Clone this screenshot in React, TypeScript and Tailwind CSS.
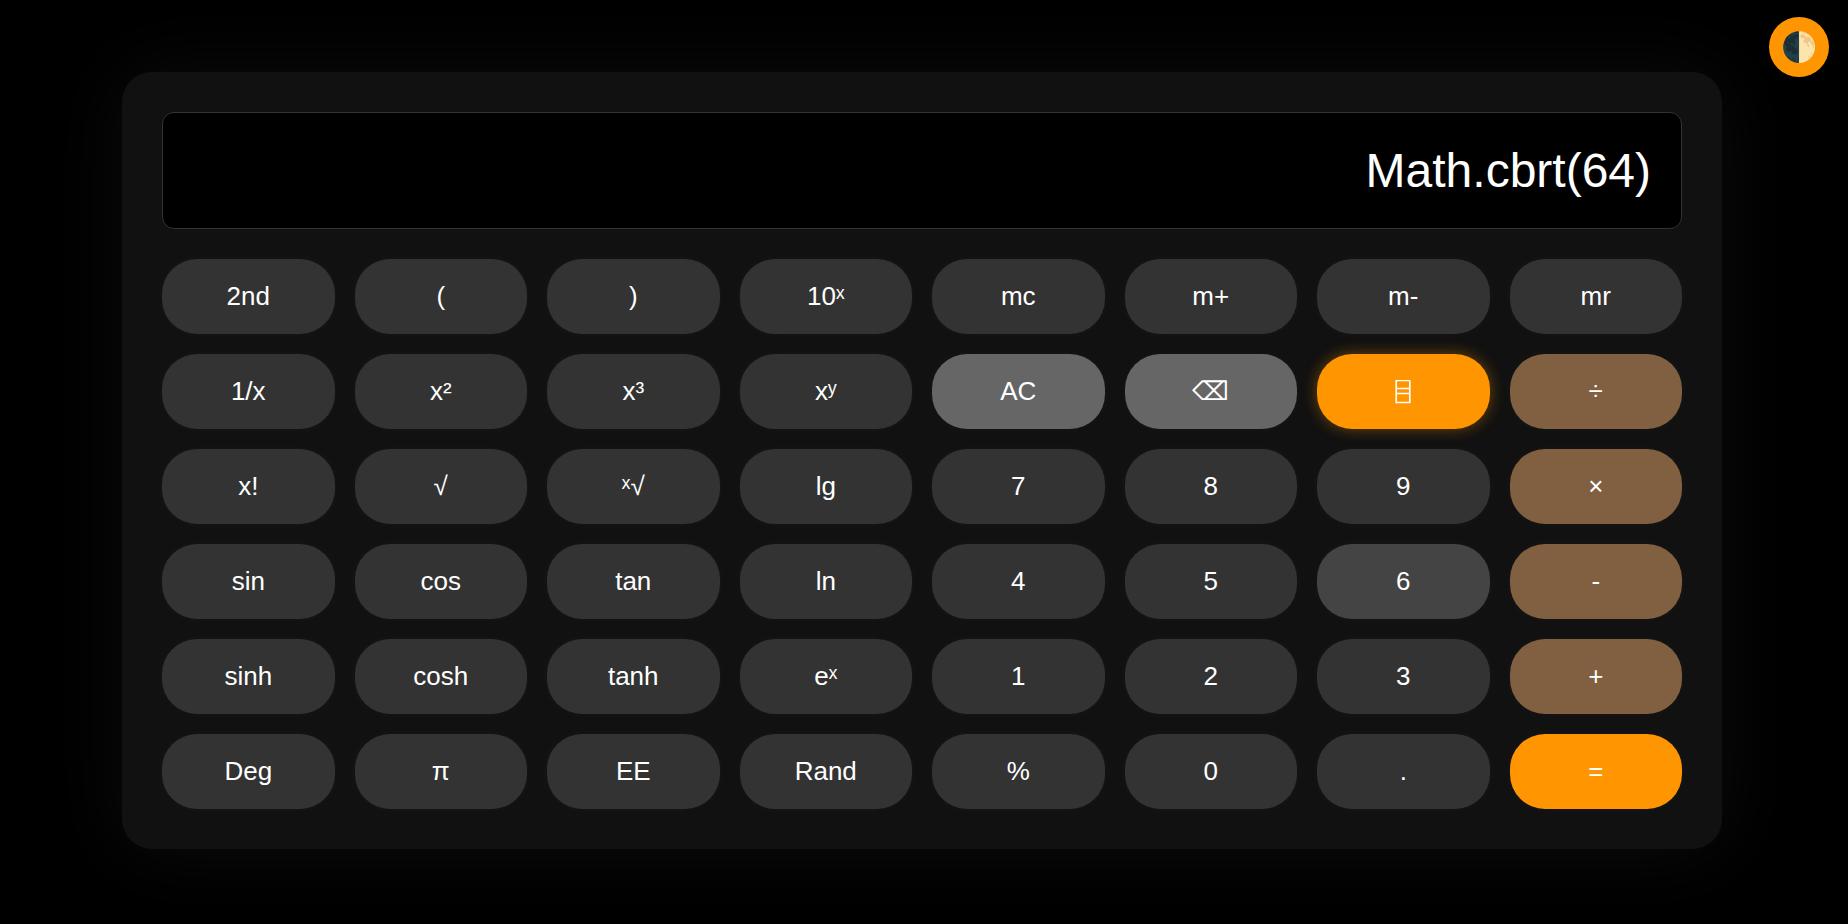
import { useState } from "react";

type Tone = "plain" | "light" | "active" | "operator" | "hovered" | "equals";

const tones: Record<Tone, string> = {
  plain: "bg-[#333] shadow-[0_0_10px_rgba(255,255,255,0.03)]",
  light: "bg-[#666] shadow-[0_0_10px_rgba(255,255,255,0.03)]",
  active: "bg-[#ff9500] shadow-[0_0_15px_rgba(255,149,0,0.4)]",
  operator: "bg-[#806040] shadow-[0_0_10px_rgba(255,255,255,0.03)]",
  hovered: "bg-[#444] shadow-[0_0_10px_rgba(255,255,255,0.03)]",
  equals: "bg-[#ff9500] shadow-[0_0_10px_rgba(255,255,255,0.03)]",
};

const rows: string[][] = [
  ["2nd", "(", ")", "10ˣ", "mc", "m+", "m-", "mr"],
  ["1/x", "x²", "x³", "xʸ", "AC", "⌫", "⌸", "÷"],
  ["x!", "√", "ˣ√", "lg", "7", "8", "9", "×"],
  ["sin", "cos", "tan", "ln", "4", "5", "6", "-"],
  ["sinh", "cosh", "tanh", "eˣ", "1", "2", "3", "+"],
  ["Deg", "π", "EE", "Rand", "%", "0", ".", "="],
];

const keyTones: Record<string, Tone> = {
  AC: "light",
  "⌫": "light",
  "⌸": "active",
  "÷": "operator",
  "×": "operator",
  "-": "operator",
  "+": "operator",
  "6": "hovered",
  "=": "equals",
};

function KeypadIcon() {
  return (
    <svg
      viewBox="0 0 16 24"
      className="mx-auto h-6 w-4"
      fill="none"
      stroke="currentColor"
      strokeWidth="1.7"
      role="img"
      aria-label="⌸"
    >
      <path d="M1.2 0.5h13.6v22H1.2zM1.2 8.5h13.6M1.2 13.5h13.6" />
    </svg>
  );
}

export default function App() {
  const [expression, setExpression] = useState("Math.cbrt(64)");

  const press = (key: string) => {
    if (key === "AC") setExpression("");
    else if (key === "⌫") setExpression((e) => e.slice(0, -1));
    else if (/^[0-9.()+\-×÷%]$/.test(key)) setExpression((e) => e + key);
  };

  return (
    <main className="flex min-h-screen items-center justify-center bg-black pr-1 pb-[3px] font-['Liberation_Sans',Arial,sans-serif] text-white">
      <button
        type="button"
        aria-label="Toggle theme"
        className="fixed top-[17px] right-[19px] flex size-[60px] items-center justify-center rounded-full bg-[#ff9500] text-[29px] leading-none"
      >
        🌓
      </button>
      <section className="w-full max-w-[1600px] rounded-[30px] bg-[#111] p-10 shadow-[0_0_80px_rgba(255,255,255,0.05)]">
        <input
          type="text"
          aria-label="Expression"
          readOnly
          value={expression}
          className="mb-[30px] block h-[117px] w-full rounded-xl border border-[#333] bg-black px-[30px] text-right text-5xl outline-none"
        />
        <div className="grid grid-cols-8 gap-5">
          {rows.flat().map((key) => (
            <button
              key={key}
              type="button"
              onClick={() => press(key)}
              className={`h-[75px] rounded-[35px] text-[26px] ${tones[keyTones[key] ?? "plain"]}`}
            >
              {key === "⌸" ? <KeypadIcon /> : key}
            </button>
          ))}
        </div>
      </section>
    </main>
  );
}
